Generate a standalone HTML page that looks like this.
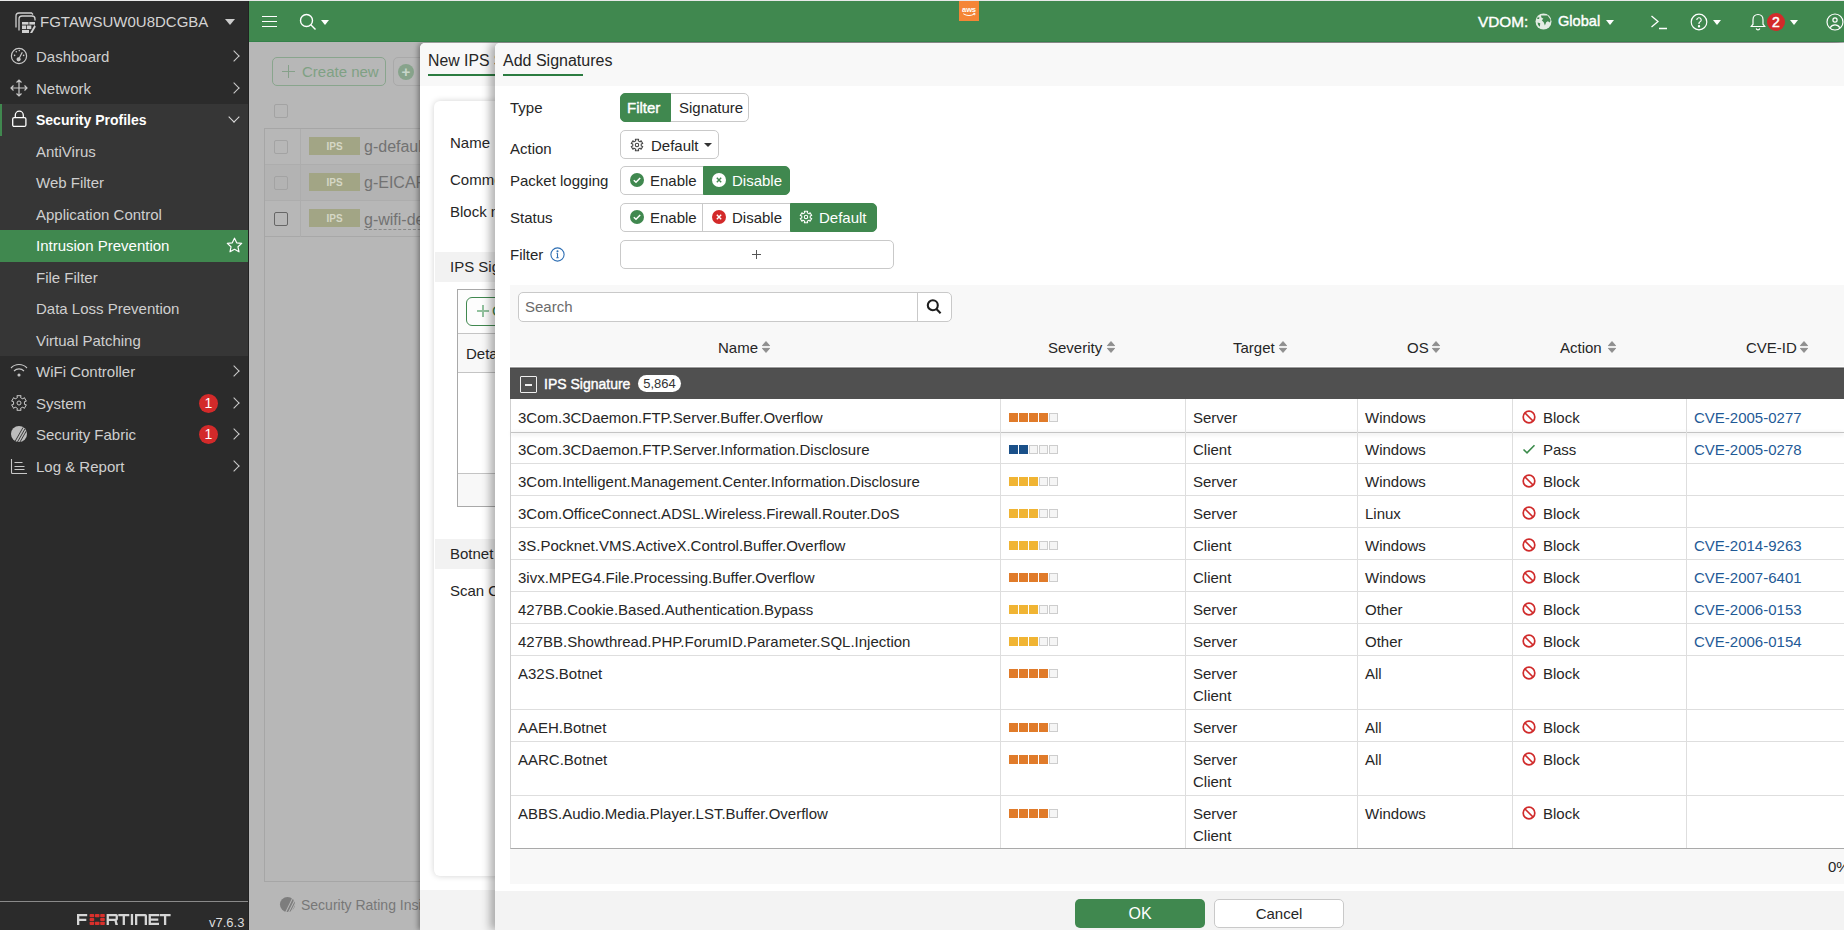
<!DOCTYPE html>
<html><head><meta charset="utf-8">
<style>
*{box-sizing:border-box;margin:0;padding:0}
html,body{width:1844px;height:930px;overflow:hidden;background:#b7b7b7;font-family:"Liberation Sans",sans-serif;font-size:15px;color:#262626}
.a{position:absolute}
.nw{white-space:nowrap}
/* sidebar */
#sb{position:absolute;left:0;top:0;width:249px;height:930px;background:#2b2b2b;border-right:1px solid #222;z-index:10}
#topline{position:absolute;left:0;top:0;width:1844px;height:1px;background:#e9e9e9;z-index:50}
.si{position:absolute;margin-top:1px;left:36px;color:#cfcfcf;font-size:15px;line-height:20px;white-space:nowrap}
.chev{position:absolute;left:230px;width:8px;height:8px;border-right:1.5px solid #ccc;border-top:1.5px solid #ccc;transform:rotate(45deg)}
.badge{position:absolute;left:199px;width:19px;height:19px;border-radius:50%;background:#d32a2a;color:#fff;font-size:14px;line-height:19px;text-align:center;font-weight:400}
/* topbar */
#tb{position:absolute;left:249px;top:1px;width:1595px;height:41px;background:#40884f;z-index:10;border-bottom:1px solid #34814a}
/* main overlay */
#main{position:absolute;left:249px;top:42px;width:1595px;height:888px;background:#b7b7b7}
/* dialogs */
#d1{position:absolute;left:420px;top:43px;width:1424px;height:887px;background:#fff;border-radius:5px 0 0 0;box-shadow:-2px 0 5px rgba(0,0,0,.35)}
#d2{position:absolute;left:495px;top:43px;width:1349px;height:887px;background:#fff;border-radius:5px 0 0 0;box-shadow:-5px 0 9px rgba(0,0,0,.3)}
#d1 .nw,#main .nw{margin-top:1px}
</style></head><body>
<div id="topline"></div>
<div id="sb">
 <svg class="a" style="left:14px;top:12px" width="22" height="22" viewBox="0 0 22 22" fill="none" stroke="#cfcfcf" stroke-width="1.3">
  <path d="M2 15.5V4a3 3 0 0 1 3-3H17.5l1.5 1.5"/>
  <path d="M5 18.5V7a3 3 0 0 1 3-3H18a3 3 0 0 1 3 3v1.5"/>
  <g fill="#d0d0d0" stroke="none"><rect x="8" y="10" width="6.5" height="2.6"/><rect x="15.3" y="10" width="5.7" height="2.6"/><rect x="8" y="13.5" width="4" height="3.6"/><rect x="12.8" y="13.5" width="4.5" height="3.6"/><rect x="8" y="18" width="7" height="3"/><path d="M16 21l4.5-8 1.3 1.8-3.6 6.2z"/></g>
 </svg>
 <div class="si" style="left:40px;top:11px;font-size:15px;color:#d4d4d4">FGTAWSUW0U8DCGBA</div>
 <div class="a" style="left:225px;top:19px;width:0;height:0;border-left:5px solid transparent;border-right:5px solid transparent;border-top:6px solid #ccc"></div>

 <svg class="a" style="left:10px;top:47px" width="18" height="18" viewBox="0 0 18 18" fill="none" stroke="#c8c8c8" stroke-width="1.2">
  <circle cx="9" cy="9" r="7.6"/><path d="M9.3 11 L12.3 5.2"/><circle cx="8.6" cy="12.3" r="1.5" fill="#c8c8c8"/>
  <g fill="#c8c8c8" stroke="none"><circle cx="4.6" cy="8.4" r=".8"/><circle cx="6.3" cy="4.8" r=".8"/><circle cx="9.3" cy="3.6" r=".8"/><circle cx="13.6" cy="8.4" r=".8"/></g>
 </svg>
 <div class="si" style="top:46px">Dashboard</div><div class="chev" style="top:52px"></div>

 <svg class="a" style="left:10px;top:79px" width="18" height="18" viewBox="0 0 18 18" fill="none" stroke="#c8c8c8" stroke-width="1.2">
  <path d="M9 1v16M1 9h16M6.5 3.5L9 1l2.5 2.5M6.5 14.5L9 17l2.5-2.5M3.5 6.5L1 9l2.5 2.5M14.5 6.5L17 9l-2.5 2.5"/>
 </svg>
 <div class="si" style="top:78px">Network</div><div class="chev" style="top:84px"></div>

 <div class="a" style="left:0;top:104px;width:248px;height:252px;background:#363636"></div>
 <div class="a" style="left:0;top:104px;width:2px;height:32px;background:#40884f"></div>
 <svg class="a" style="left:11px;top:110px" width="17" height="18" viewBox="0 0 17 18" fill="none" stroke="#fff" stroke-width="1.3">
  <rect x="1.7" y="7.6" width="13.2" height="8.8" rx="1.5"/><path d="M4.3 7.6V5.2a4 4 0 0 1 8 0v2.4"/>
 </svg>
 <div class="si" style="top:109px;color:#fff;font-weight:700;font-size:14px">Security Profiles</div>
 <div class="a" style="left:230px;top:113px;width:8px;height:8px;border-right:1.5px solid #ddd;border-bottom:1.5px solid #ddd;transform:rotate(45deg)"></div>

 <div class="si" style="top:141px">AntiVirus</div>
 <div class="si" style="top:172px">Web Filter</div>
 <div class="si" style="top:204px">Application Control</div>
 <div class="a" style="left:0;top:230px;width:248px;height:32px;background:#40884f"></div>
 <div class="si" style="top:235px;color:#fff">Intrusion Prevention</div>
 <svg class="a" style="left:226px;top:237px" width="17" height="17" viewBox="0 0 17 17" fill="none" stroke="#fff" stroke-width="1.2">
  <path d="M8.5 1.2l2.2 4.6 5 .6-3.7 3.4 1 5-4.5-2.5-4.5 2.5 1-5L1.3 6.4l5-.6z" stroke-linejoin="round"/>
 </svg>
 <div class="si" style="top:267px">File Filter</div>
 <div class="si" style="top:298px">Data Loss Prevention</div>
 <div class="si" style="top:330px">Virtual Patching</div>

 <svg class="a" style="left:10px;top:363px" width="18" height="15" viewBox="0 0 18 15" fill="none" stroke="#c8c8c8" stroke-width="1.1">
  <path d="M1 5 a11 11 0 0 1 16 0"/><path d="M4 8 a7 7 0 0 1 10 0"/><circle cx="9" cy="12" r="1" fill="#c8c8c8"/>
 </svg>
 <div class="si" style="top:361px">WiFi Controller</div><div class="chev" style="top:367px"></div>

 <svg class="a" style="left:10px;top:394px" width="18" height="18" viewBox="0 0 18 18" fill="none" stroke="#c8c8c8" stroke-width="1">
  <path d="M6.91 1.69 L11.09 1.69 L10.54 3.62 L12.89 4.97 L14.28 3.53 L16.37 7.16 L14.43 7.65 L14.43 10.35 L16.37 10.84 L14.28 14.47 L12.89 13.03 L10.54 14.38 L11.09 16.31 L6.91 16.31 L7.46 14.38 L5.11 13.03 L3.72 14.47 L1.63 10.84 L3.57 10.35 L3.57 7.65 L1.63 7.16 L3.72 3.53 L5.11 4.97 L7.46 3.62Z" stroke-linejoin="round"/>
  <circle cx="9" cy="9" r="2"/>
 </svg>
 <div class="si" style="top:393px">System</div>
 <div class="badge" style="top:394px">1</div><div class="chev" style="top:399px"></div>

 <svg class="a" style="left:10px;top:425px" width="18" height="18" viewBox="0 0 18 18">
  <circle cx="9" cy="9" r="8" fill="#bdbdbd"/>
  <path d="M5 16.5L13 2.5M7.3 17.3L15 3.8M9.6 17.6L16.6 5.5" stroke="#2c2c2c" stroke-width=".9"/>
 </svg>
 <div class="si" style="top:424px">Security Fabric</div>
 <div class="badge" style="top:425px">1</div><div class="chev" style="top:430px"></div>

 <svg class="a" style="left:10px;top:458px" width="18" height="16" viewBox="0 0 18 16" fill="none" stroke="#c8c8c8" stroke-width="1.1">
  <path d="M1.5 1v13.5a1 1 0 0 0 1 1H17"/><path d="M4.5 4.5h8M4.5 8.5h10M4.5 11.5h10"/>
 </svg>
 <div class="si" style="top:456px">Log &amp; Report</div><div class="chev" style="top:462px"></div>

 <div class="a" style="left:0;top:901px;width:248px;height:1px;background:#8a8a8a"></div>
 <svg class="a" style="left:77px;top:914px" width="94" height="11" viewBox="0 0 94 11" fill="#d6d6d6">
 <path d="M0 0h10.2v2.3H2.3v2.5h7v2.3h-7V11H0z"/>
 <g fill="#d9302c">
  <rect x="12.6" y="0" width="4.6" height="3.2" rx=".8"/><rect x="17.9" y="0" width="4.6" height="3.2" rx=".8"/><rect x="23.2" y="0" width="4.6" height="3.2" rx=".8"/>
  <rect x="12.6" y="3.9" width="4.6" height="3.2" rx=".8"/><rect x="23.2" y="3.9" width="4.6" height="3.2" rx=".8"/>
  <rect x="12.6" y="7.8" width="4.6" height="3.2" rx=".8"/><rect x="17.9" y="7.8" width="4.6" height="3.2" rx=".8"/><rect x="23.2" y="7.8" width="4.6" height="3.2" rx=".8"/>
 </g>
 <path d="M29.6 0h9.5a1.8 1.8 0 0 1 1.8 1.8v3.2a1.8 1.8 0 0 1-1.2 1.7L41 11h-2.6l-.9-4H31.9V11h-2.3zM31.9 2.3v2.5h6.7V2.3z"/>
 <path d="M41.3 0h11v2.3h-4.35V11h-2.3V2.3h-4.35z"/>
 <path d="M53.8 0h2.3v11h-2.3z"/>
 <path d="M58 11V0h10.2a1.8 1.8 0 0 1 1.8 1.8V11h-2.3V2.3h-7.4V11z"/>
 <path d="M71.6 0h10.4v2.3h-8.1v2.3h7.4v2.2h-7.4v1.9h8.1V11H71.6z"/>
 <path d="M82.6 0h11v2.3h-4.35V11h-2.3V2.3h-4.35z"/>
</svg>
 <div class="a nw" style="left:209px;top:915px;font-size:13px;color:#ddd">v7.6.3</div>
</div>
<div id="tb">
 <div class="a" style="left:13px;top:15px;width:15px;height:1.4px;background:#fff"></div>
 <div class="a" style="left:13px;top:20px;width:15px;height:1.4px;background:#fff"></div>
 <div class="a" style="left:13px;top:25px;width:15px;height:1.4px;background:#fff"></div>
 <svg class="a" style="left:50px;top:12px" width="18" height="18" viewBox="0 0 18 18" fill="none" stroke="#fff" stroke-width="1.4"><circle cx="7.5" cy="7.5" r="6"/><path d="M11.8 11.8L16.5 16.5"/></svg>
 <div class="a" style="left:72px;top:19px;width:0;height:0;border-left:4px solid transparent;border-right:4px solid transparent;border-top:5px solid #fff"></div>
 <svg class="a" style="left:710px;top:0" width="20" height="20" viewBox="0 0 20 20"><rect width="20" height="20" fill="#f58536"/><text x="10" y="11.3" text-anchor="middle" font-family="Liberation Sans" font-weight="700" font-size="7.6" fill="#fff" letter-spacing="-.2">aws</text><path d="M4.3 12.8Q10 16.3 15.6 12.8" stroke="#fff" stroke-width="1" fill="none"/><path d="M14.2 12.3l1.8.2-.4 1.7" stroke="#fff" stroke-width=".9" fill="none"/></svg>
 <div class="a nw" style="left:1229px;top:12px;font-size:15.3px;color:#fff;-webkit-text-stroke:.4px #fff">VDOM:</div>
 <svg class="a" style="left:1286px;top:12px" width="17" height="17" viewBox="0 0 17 17"><circle cx="8.5" cy="8.5" r="8" fill="#e3ece4"/><path d="M6 2.6L12.6 2.4L15.6 6.8L15 9.6L12.8 8.2L11.2 9.2L9.9 12.6L8.7 9.2L6.8 7.2L8.4 5.8L6.4 4.6Z M2.6 9.4L5.2 10.3L4.9 13.8L3.1 12Z M2.4 4.6L4.4 4.2L4.1 6.1L2.2 6Z" fill="#40884f"/></svg>
 <div class="a nw" style="left:1309px;top:12px;font-size:14.6px;color:#fff;-webkit-text-stroke:.4px #fff">Global</div>
 <div class="a" style="left:1357px;top:19px;width:0;height:0;border-left:4.5px solid transparent;border-right:4.5px solid transparent;border-top:5px solid #fff"></div>
 <svg class="a" style="left:1401px;top:13px" width="18" height="16" viewBox="0 0 18 16" fill="none" stroke="#fff" stroke-width="1.3"><path d="M1.5 2L8 7.5 1.5 13M9 14.5h8"/></svg>
 <svg class="a" style="left:1441px;top:12px" width="18" height="18" viewBox="0 0 18 18" fill="none" stroke="#fff" stroke-width="1.2"><circle cx="9" cy="9" r="7.8"/><path d="M6.8 7a2.2 2.2 0 1 1 3 2c-.6.3-.8.7-.8 1.4v.6"/><circle cx="9" cy="13.3" r=".6" fill="#fff"/></svg>
 <div class="a" style="left:1464px;top:19px;width:0;height:0;border-left:4.5px solid transparent;border-right:4.5px solid transparent;border-top:5px solid #fff"></div>
 <svg class="a" style="left:1501px;top:12px" width="16" height="18" viewBox="0 0 16 18" fill="none" stroke="#fff" stroke-width="1.2"><path d="M8 1.5c-3 0-5 2.2-5 5.2v4.5L1.3 13.5h13.4L13 11.2V6.7c0-3-2-5.2-5-5.2zM6.2 15.5a1.9 1.9 0 0 0 3.6 0"/></svg>
 <div class="a" style="left:1518px;top:12px;width:18px;height:18px;border-radius:50%;background:#d32a2a;color:#fff;font-size:14px;-webkit-text-stroke:.5px #fff;text-align:center;line-height:18px">2</div>
 <div class="a" style="left:1541px;top:19px;width:0;height:0;border-left:4.5px solid transparent;border-right:4.5px solid transparent;border-top:5px solid #fff"></div>
 <svg class="a" style="left:1577px;top:12px" width="18" height="18" viewBox="0 0 18 18" fill="none" stroke="#fff" stroke-width="1.2"><circle cx="9" cy="9" r="8"/><circle cx="9" cy="7" r="2.1"/><path d="M4.2 14.8c1-2 2.8-3 4.8-3s3.8 1 4.8 3"/></svg>
</div>
<div id="main">
 <div class="a" style="left:23px;top:15px;width:114px;height:29px;border:1px solid #89a58d;border-radius:5px"></div><div class="a nw" style="left:53px;top:20px;color:#7fa184;font-size:15px;line-height:18px">Create new</div>
 <div class="a" style="left:33px;top:29px;width:13px;height:1.3px;background:#86a08a"></div>
 <div class="a" style="left:39px;top:23px;width:1.3px;height:13px;background:#86a08a"></div>
 <div class="a" style="left:144px;top:15px;width:40px;height:29px;border:1px solid #a9a9a9;border-radius:5px"></div>
 <div class="a" style="left:149px;top:22px;width:16px;height:16px;border-radius:50%;background:#87a38b;color:#c8d6ca;font-size:15px;line-height:16px;text-align:center;font-weight:700">+</div>
 <div class="a" style="left:25px;top:62px;width:14px;height:14px;border:1px solid #a3a3a3;border-radius:2px"></div>
 <div class="a" style="left:15px;top:86px;width:200px;height:754px;border:1px solid #a6a6a6;border-right:none"></div>
 <div class="a" style="left:16px;top:87px;width:199px;height:36px;border-bottom:1px solid #adadad"></div>
 <div class="a" style="left:16px;top:123px;width:199px;height:36px;border-bottom:1px solid #adadad;background:#b3b3b3"></div>
 <div class="a" style="left:16px;top:159px;width:199px;height:36px;border-bottom:1px solid #a8a8a8"></div>
 <div class="a" style="left:51px;top:87px;width:1px;height:108px;background:#adadad"></div>
 <div class="a" style="left:25px;top:98px;width:14px;height:14px;border:1px solid #a3a3a3;border-radius:2px"></div>
 <div class="a" style="left:25px;top:134px;width:14px;height:14px;border:1px solid #a3a3a3;border-radius:2px"></div>
 <div class="a" style="left:25px;top:170px;width:14px;height:14px;border:1.3px solid #666;border-radius:2px"></div>
 <div class="a" style="left:60px;top:95px;width:51px;height:18px;background:#a2a585;color:#d5d7c6;font-size:10px;font-weight:700;text-align:center;line-height:20px">IPS</div>
 <div class="a" style="left:60px;top:131px;width:51px;height:18px;background:#a2a585;color:#d5d7c6;font-size:10px;font-weight:700;text-align:center;line-height:20px">IPS</div>
 <div class="a" style="left:60px;top:167px;width:51px;height:18px;background:#a2a585;color:#d5d7c6;font-size:10px;font-weight:700;text-align:center;line-height:20px">IPS</div>
 <div class="a nw" style="left:115px;top:95px;font-size:16px;color:#727272">g-default</div>
 <div class="a nw" style="left:115px;top:131px;font-size:16px;color:#727272">g-EICAR</div>
 <div class="a nw" style="left:115px;top:167px;font-size:16px;color:#727272;border-bottom:1px dashed #888;line-height:19px">g-wifi-default</div>
 <svg class="a" style="left:30px;top:854px" width="17" height="17" viewBox="0 0 18 18">
  <circle cx="9" cy="9" r="8" fill="#7d7d7d"/>
  <path d="M7 17.5L14.5 2M10 17.5L16.5 4.5M13 16.5L17.5 7.5" stroke="#b7b7b7" stroke-width="1.1"/>
 </svg>
 <div class="a nw" style="left:52px;top:854px;font-size:14px;color:#777">Security Rating Insights</div>
</div>
<div id="d1">
 <div class="a" style="left:0;top:0;width:100%;height:43px;background:#f8f8f8;border-radius:5px 0 0 0"></div>
 <div class="a nw" style="left:8px;top:8px;font-size:15.8px;color:#262626">New IPS Sensor</div>
 <div class="a" style="left:8px;top:31px;width:100px;height:2px;background:#2c7c41"></div>
 <div class="a" style="left:14px;top:58px;width:400px;height:775px;background:#fff;border-radius:6px;box-shadow:0 0 6px rgba(0,0,0,.18)"></div>
 <div class="a nw" style="left:30px;top:90px">Name</div>
 <div class="a nw" style="left:30px;top:127px">Comments</div>
 <div class="a nw" style="left:30px;top:159px">Block malicious</div>
 <div class="a" style="left:15px;top:209px;width:400px;height:30px;background:#f2f2f2"></div>
 <div class="a nw" style="left:30px;top:214px">IPS Signatures</div>
 <div class="a" style="left:37px;top:246px;width:300px;height:218px;border:1px solid #a9a9a9"></div>
 <div class="a" style="left:38px;top:247px;width:300px;height:44px;background:#fdfdfd;border-bottom:1px solid #c4c4c4"></div>
 <div class="a" style="left:46px;top:254px;width:100px;height:29px;border:1px solid #40884f;border-radius:6px"></div>
 <div class="a" style="left:57px;top:267px;width:12px;height:2px;background:#92c29e"></div>
 <div class="a" style="left:62px;top:262px;width:2px;height:12px;background:#92c29e"></div>
 <div class="a nw" style="left:72px;top:258px;color:#40884f">Create New</div>
 <div class="a" style="left:38px;top:291px;width:300px;height:39px;background:#f8f8f8;border-bottom:1px solid #c4c4c4"></div>
 <div class="a nw" style="left:46px;top:301px">Details</div>
 <div class="a" style="left:38px;top:430px;width:300px;height:33px;background:#f8f8f8;border-top:1px solid #c4c4c4"></div>
 <div class="a" style="left:15px;top:496px;width:400px;height:30px;background:#f2f2f2"></div>
 <div class="a nw" style="left:30px;top:501px">Botnet C&amp;C</div>
 <div class="a nw" style="left:30px;top:538px">Scan Outgoing</div>
 <div class="a" style="left:0;top:847px;width:100%;height:40px;background:#f3f3f3"></div>
</div>
<div id="d2">
<div class="a" style="left:0;top:0;width:100%;height:43px;background:#f8f8f8;border-radius:5px 0 0 0"></div>
<div class="a nw" style="left:8px;top:9px;font-size:16px;color:#262626">Add Signatures</div>
<div class="a" style="left:8px;top:31px;width:80px;height:2px;background:#2c7c41"></div>
<div class="a nw" style="left:15px;top:56px;line-height:18px">Type</div>
<div class="a nw" style="left:15px;top:97px;line-height:18px">Action</div>
<div class="a nw" style="left:15px;top:129px;line-height:18px">Packet logging</div>
<div class="a nw" style="left:15px;top:166px;line-height:18px">Status</div>
<div class="a nw" style="left:15px;top:203px;line-height:18px">Filter</div>
<svg class="a" style="left:55px;top:204px" width="15" height="15" viewBox="0 0 15 15" fill="none" stroke="#2f6fb3" stroke-width="1.1"><circle cx="7.5" cy="7.5" r="6.6"/><path d="M7.5 6.3v4.5M6.3 10.8h2.4M6.5 6.3h1"/><circle cx="7.5" cy="4.2" r=".5" fill="#2f6fb3"/></svg>
<div class="a" style="left:125px;top:50px;width:129px;height:29px">
<div class="a" style="left:0px;top:0;width:51px;height:29px;background:#40884f;color:#fff;border:1px solid #40884f;border-radius:5px 0 0 5px;z-index:1;"><div class="a" style="left:-1px;top:-1px"><div class="a nw" style="left:7px;top:6px;line-height:18px;font-size:15px;-webkit-text-stroke:.4px #fff">Filter</div></div></div>
<div class="a" style="left:50px;top:0;width:79px;height:29px;background:#fff;color:#262626;border:1px solid #c9c9c9;border-radius:0 5px 5px 0;"><div class="a" style="left:-1px;top:-1px"><div class="a nw" style="left:9px;top:6px;line-height:18px;">Signature</div></div></div>
</div>
<div class="a" style="left:125px;top:87px;width:99px;height:29px;border:1px solid #c9c9c9;border-radius:5px;background:#fff"><svg class="a" style="left:9px;top:7px" width="14" height="14" viewBox="0 0 18 18" fill="none" stroke="#444" stroke-width="1.4"><path d="M6.91 1.69 L11.09 1.69 L10.54 3.62 L12.89 4.97 L14.28 3.53 L16.37 7.16 L14.43 7.65 L14.43 10.35 L16.37 10.84 L14.28 14.47 L12.89 13.03 L10.54 14.38 L11.09 16.31 L6.91 16.31 L7.46 14.38 L5.11 13.03 L3.72 14.47 L1.63 10.84 L3.57 10.35 L3.57 7.65 L1.63 7.16 L3.72 3.53 L5.11 4.97 L7.46 3.62Z" stroke-linejoin="round"/><circle cx="9" cy="9" r="2.2"/></svg><div class="a nw" style="left:30px;top:6px;line-height:18px;">Default</div><div class="a" style="left:83px;top:12px;border-left:4px solid transparent;border-right:4px solid transparent;border-top:4.5px solid #333"></div></div>
<div class="a" style="left:125px;top:123px;width:170px;height:29px">
<div class="a" style="left:0px;top:0;width:84px;height:29px;background:#fff;color:#262626;border:1px solid #c9c9c9;border-radius:5px 0 0 5px;"><div class="a" style="left:-1px;top:-1px"><svg class="a" style="left:10px;top:7px" width="14" height="14" viewBox="0 0 14 14"><circle cx="7" cy="7" r="7" fill="#40884f"/><path d="M3.8 7.2l2.2 2.1 4.2-4.3" stroke="#fff" stroke-width="1.5" fill="none"/></svg><div class="a nw" style="left:30px;top:6px;line-height:18px;">Enable</div></div></div>
<div class="a" style="left:83px;top:0;width:87px;height:29px;background:#40884f;color:#fff;border:1px solid #40884f;border-radius:0 5px 5px 0;z-index:1;"><div class="a" style="left:-1px;top:-1px"><svg class="a" style="left:9px;top:7px" width="14" height="14" viewBox="0 0 14 14"><circle cx="7" cy="7" r="7" fill="#fff"/><path d="M4.8 4.8l4.4 4.4M9.2 4.8l-4.4 4.4" stroke="#40884f" stroke-width="1.4"/></svg><div class="a nw" style="left:29px;top:6px;line-height:18px;">Disable</div></div></div>
</div>
<div class="a" style="left:125px;top:160px;width:257px;height:29px">
<div class="a" style="left:0px;top:0;width:83px;height:29px;background:#fff;color:#262626;border:1px solid #c9c9c9;border-radius:5px 0 0 5px;"><div class="a" style="left:-1px;top:-1px"><svg class="a" style="left:10px;top:7px" width="14" height="14" viewBox="0 0 14 14"><circle cx="7" cy="7" r="7" fill="#40884f"/><path d="M3.8 7.2l2.2 2.1 4.2-4.3" stroke="#fff" stroke-width="1.5" fill="none"/></svg><div class="a nw" style="left:30px;top:6px;line-height:18px;">Enable</div></div></div>
<div class="a" style="left:82px;top:0;width:89px;height:29px;background:#fff;color:#262626;border:1px solid #c9c9c9;border-radius:0;"><div class="a" style="left:-1px;top:-1px"><svg class="a" style="left:10px;top:7px" width="14" height="14" viewBox="0 0 14 14"><circle cx="7" cy="7" r="7" fill="#d32a2a"/><path d="M4.8 4.8l4.4 4.4M9.2 4.8l-4.4 4.4" stroke="#fff" stroke-width="1.4"/></svg><div class="a nw" style="left:30px;top:6px;line-height:18px;">Disable</div></div></div>
<div class="a" style="left:170px;top:0;width:87px;height:29px;background:#40884f;color:#fff;border:1px solid #40884f;border-radius:0 5px 5px 0;z-index:1;"><div class="a" style="left:-1px;top:-1px"><svg class="a" style="left:9px;top:7px" width="14" height="14" viewBox="0 0 18 18" fill="none" stroke="#fff" stroke-width="1.4"><path d="M6.91 1.69 L11.09 1.69 L10.54 3.62 L12.89 4.97 L14.28 3.53 L16.37 7.16 L14.43 7.65 L14.43 10.35 L16.37 10.84 L14.28 14.47 L12.89 13.03 L10.54 14.38 L11.09 16.31 L6.91 16.31 L7.46 14.38 L5.11 13.03 L3.72 14.47 L1.63 10.84 L3.57 10.35 L3.57 7.65 L1.63 7.16 L3.72 3.53 L5.11 4.97 L7.46 3.62Z" stroke-linejoin="round"/><circle cx="9" cy="9" r="2.2"/></svg><div class="a nw" style="left:29px;top:6px;line-height:18px;">Default</div></div></div>
</div>
<div class="a" style="left:125px;top:197px;width:274px;height:29px;border:1px solid #c9c9c9;border-radius:5px;background:#fff"></div>
<div class="a" style="left:257px;top:211px;width:9px;height:1px;background:#555"></div>
<div class="a" style="left:261px;top:207px;width:1px;height:9px;background:#555"></div>
<div class="a" style="left:15px;top:242px;width:1334px;height:599px;background:#f8f8f8"></div>
<div class="a" style="left:23px;top:249px;width:434px;height:30px;border:1px solid #c9c9c9;border-radius:5px;background:#fff"></div>
<div class="a" style="left:422px;top:250px;width:1px;height:28px;background:#c9c9c9"></div>
<div class="a nw" style="left:30px;top:255px;line-height:18px;color:#6b6b6b">Search</div>
<svg class="a" style="left:431px;top:255px" width="16" height="17" viewBox="0 0 16 17" fill="none" stroke="#1e1e1e" stroke-width="2.1"><circle cx="6.8" cy="7.3" r="5"/><path d="M10.4 11l4.2 4.3"/></svg>
<div class="a nw" style="left:223px;top:296px;line-height:18px;">Name</div>
<svg class="a" style="left:266px;top:297px" width="10" height="14" viewBox="0 0 10 14" fill="#8f8f8f" stroke="#8f8f8f" stroke-width="1" stroke-linejoin="round"><path d="M5 1.6L8.6 5.6H1.4z M5 12.4L8.6 8.4H1.4z"/></svg>
<div class="a nw" style="left:553px;top:296px;line-height:18px;">Severity</div>
<svg class="a" style="left:611px;top:297px" width="10" height="14" viewBox="0 0 10 14" fill="#8f8f8f" stroke="#8f8f8f" stroke-width="1" stroke-linejoin="round"><path d="M5 1.6L8.6 5.6H1.4z M5 12.4L8.6 8.4H1.4z"/></svg>
<div class="a nw" style="left:738px;top:296px;line-height:18px;">Target</div>
<svg class="a" style="left:783px;top:297px" width="10" height="14" viewBox="0 0 10 14" fill="#8f8f8f" stroke="#8f8f8f" stroke-width="1" stroke-linejoin="round"><path d="M5 1.6L8.6 5.6H1.4z M5 12.4L8.6 8.4H1.4z"/></svg>
<div class="a nw" style="left:912px;top:296px;line-height:18px;">OS</div>
<svg class="a" style="left:936px;top:297px" width="10" height="14" viewBox="0 0 10 14" fill="#8f8f8f" stroke="#8f8f8f" stroke-width="1" stroke-linejoin="round"><path d="M5 1.6L8.6 5.6H1.4z M5 12.4L8.6 8.4H1.4z"/></svg>
<div class="a nw" style="left:1065px;top:296px;line-height:18px;">Action</div>
<svg class="a" style="left:1112px;top:297px" width="10" height="14" viewBox="0 0 10 14" fill="#8f8f8f" stroke="#8f8f8f" stroke-width="1" stroke-linejoin="round"><path d="M5 1.6L8.6 5.6H1.4z M5 12.4L8.6 8.4H1.4z"/></svg>
<div class="a nw" style="left:1251px;top:296px;line-height:18px;">CVE-ID</div>
<svg class="a" style="left:1304px;top:297px" width="10" height="14" viewBox="0 0 10 14" fill="#8f8f8f" stroke="#8f8f8f" stroke-width="1" stroke-linejoin="round"><path d="M5 1.6L8.6 5.6H1.4z M5 12.4L8.6 8.4H1.4z"/></svg>
<div class="a" style="left:15px;top:323px;width:1334px;height:1px;background:#fff"></div>
<div class="a" style="left:15px;top:324px;width:1334px;height:32px;background:#505050;border-top:1px solid #9e9e9e"></div>
<div class="a" style="left:15px;top:325px;width:1334px;height:1px;background:#484848"></div>
<div class="a" style="left:25px;top:333px;width:17px;height:17px;border:1.5px solid #eee;border-radius:1px"></div>
<div class="a" style="left:30px;top:341px;width:7px;height:1.5px;background:#eee"></div>
<div class="a nw" style="left:49px;top:332px;line-height:18px;color:#fff;font-size:14px;-webkit-text-stroke:.4px #fff">IPS Signature</div>
<div class="a nw" style="left:143px;top:332px;width:43px;height:17px;border-radius:9px;background:#fff;color:#333;font-size:13px;line-height:17px;text-align:center">5,864</div>
<div class="a" style="left:15px;top:356px;width:1334px;height:450px;background:#fff;border-left:1px solid #cfcfcf;border-bottom:1px solid #a9a9a9"></div>
<div class="a" style="left:16px;top:389px;width:1333px;height:1px;background:#c4c4c4;box-shadow:0 1px 4px rgba(0,0,0,.22);"></div>
<div class="a nw" style="left:23px;top:366px;line-height:18px;">3Com.3CDaemon.FTP.Server.Buffer.Overflow</div>
<div class="a" style="left:514px;top:370px;width:9px;height:9px;background:#e07b2a"></div>
<div class="a" style="left:524px;top:370px;width:9px;height:9px;background:#e07b2a"></div>
<div class="a" style="left:534px;top:370px;width:9px;height:9px;background:#e07b2a"></div>
<div class="a" style="left:544px;top:370px;width:9px;height:9px;background:#e07b2a"></div>
<div class="a" style="left:554px;top:370px;width:9px;height:9px;background:#f5f5f5;border:1px solid #cdcdcd"></div>
<div class="a nw" style="left:698px;top:366px;line-height:18px;">Server</div>
<div class="a nw" style="left:870px;top:366px;line-height:18px;">Windows</div>
<svg class="a" style="left:1027px;top:367px" width="14" height="14" viewBox="0 0 14 14" fill="none" stroke="#d02b2b" stroke-width="1.7"><circle cx="7" cy="7" r="5.8"/><path d="M3 3l8 8"/></svg>
<div class="a nw" style="left:1048px;top:366px;line-height:18px;">Block</div>
<div class="a nw" style="left:1199px;top:366px;line-height:18px;color:#1f5a96">CVE-2005-0277</div>
<div class="a" style="left:16px;top:420px;width:1333px;height:1px;background:#dedede;"></div>
<div class="a nw" style="left:23px;top:398px;line-height:18px;">3Com.3CDaemon.FTP.Server.Information.Disclosure</div>
<div class="a" style="left:514px;top:402px;width:9px;height:9px;background:#1a5089"></div>
<div class="a" style="left:524px;top:402px;width:9px;height:9px;background:#1a5089"></div>
<div class="a" style="left:534px;top:402px;width:9px;height:9px;background:#f5f5f5;border:1px solid #cdcdcd"></div>
<div class="a" style="left:544px;top:402px;width:9px;height:9px;background:#f5f5f5;border:1px solid #cdcdcd"></div>
<div class="a" style="left:554px;top:402px;width:9px;height:9px;background:#f5f5f5;border:1px solid #cdcdcd"></div>
<div class="a nw" style="left:698px;top:398px;line-height:18px;">Client</div>
<div class="a nw" style="left:870px;top:398px;line-height:18px;">Windows</div>
<svg class="a" style="left:1027px;top:399px" width="14" height="14" viewBox="0 0 14 14" fill="none" stroke="#3a8a4a" stroke-width="1.6"><path d="M1.5 7.5l3.5 3.3 7.5-7.5"/></svg>
<div class="a nw" style="left:1048px;top:398px;line-height:18px;">Pass</div>
<div class="a nw" style="left:1199px;top:398px;line-height:18px;color:#1f5a96">CVE-2005-0278</div>
<div class="a" style="left:16px;top:452px;width:1333px;height:1px;background:#dedede;"></div>
<div class="a nw" style="left:23px;top:430px;line-height:18px;">3Com.Intelligent.Management.Center.Information.Disclosure</div>
<div class="a" style="left:514px;top:434px;width:9px;height:9px;background:#f0b433"></div>
<div class="a" style="left:524px;top:434px;width:9px;height:9px;background:#f0b433"></div>
<div class="a" style="left:534px;top:434px;width:9px;height:9px;background:#f0b433"></div>
<div class="a" style="left:544px;top:434px;width:9px;height:9px;background:#f5f5f5;border:1px solid #cdcdcd"></div>
<div class="a" style="left:554px;top:434px;width:9px;height:9px;background:#f5f5f5;border:1px solid #cdcdcd"></div>
<div class="a nw" style="left:698px;top:430px;line-height:18px;">Server</div>
<div class="a nw" style="left:870px;top:430px;line-height:18px;">Windows</div>
<svg class="a" style="left:1027px;top:431px" width="14" height="14" viewBox="0 0 14 14" fill="none" stroke="#d02b2b" stroke-width="1.7"><circle cx="7" cy="7" r="5.8"/><path d="M3 3l8 8"/></svg>
<div class="a nw" style="left:1048px;top:430px;line-height:18px;">Block</div>
<div class="a" style="left:16px;top:484px;width:1333px;height:1px;background:#dedede;"></div>
<div class="a nw" style="left:23px;top:462px;line-height:18px;">3Com.OfficeConnect.ADSL.Wireless.Firewall.Router.DoS</div>
<div class="a" style="left:514px;top:466px;width:9px;height:9px;background:#f0b433"></div>
<div class="a" style="left:524px;top:466px;width:9px;height:9px;background:#f0b433"></div>
<div class="a" style="left:534px;top:466px;width:9px;height:9px;background:#f0b433"></div>
<div class="a" style="left:544px;top:466px;width:9px;height:9px;background:#f5f5f5;border:1px solid #cdcdcd"></div>
<div class="a" style="left:554px;top:466px;width:9px;height:9px;background:#f5f5f5;border:1px solid #cdcdcd"></div>
<div class="a nw" style="left:698px;top:462px;line-height:18px;">Server</div>
<div class="a nw" style="left:870px;top:462px;line-height:18px;">Linux</div>
<svg class="a" style="left:1027px;top:463px" width="14" height="14" viewBox="0 0 14 14" fill="none" stroke="#d02b2b" stroke-width="1.7"><circle cx="7" cy="7" r="5.8"/><path d="M3 3l8 8"/></svg>
<div class="a nw" style="left:1048px;top:462px;line-height:18px;">Block</div>
<div class="a" style="left:16px;top:516px;width:1333px;height:1px;background:#dedede;"></div>
<div class="a nw" style="left:23px;top:494px;line-height:18px;">3S.Pocknet.VMS.ActiveX.Control.Buffer.Overflow</div>
<div class="a" style="left:514px;top:498px;width:9px;height:9px;background:#f0b433"></div>
<div class="a" style="left:524px;top:498px;width:9px;height:9px;background:#f0b433"></div>
<div class="a" style="left:534px;top:498px;width:9px;height:9px;background:#f0b433"></div>
<div class="a" style="left:544px;top:498px;width:9px;height:9px;background:#f5f5f5;border:1px solid #cdcdcd"></div>
<div class="a" style="left:554px;top:498px;width:9px;height:9px;background:#f5f5f5;border:1px solid #cdcdcd"></div>
<div class="a nw" style="left:698px;top:494px;line-height:18px;">Client</div>
<div class="a nw" style="left:870px;top:494px;line-height:18px;">Windows</div>
<svg class="a" style="left:1027px;top:495px" width="14" height="14" viewBox="0 0 14 14" fill="none" stroke="#d02b2b" stroke-width="1.7"><circle cx="7" cy="7" r="5.8"/><path d="M3 3l8 8"/></svg>
<div class="a nw" style="left:1048px;top:494px;line-height:18px;">Block</div>
<div class="a nw" style="left:1199px;top:494px;line-height:18px;color:#1f5a96">CVE-2014-9263</div>
<div class="a" style="left:16px;top:548px;width:1333px;height:1px;background:#dedede;"></div>
<div class="a nw" style="left:23px;top:526px;line-height:18px;">3ivx.MPEG4.File.Processing.Buffer.Overflow</div>
<div class="a" style="left:514px;top:530px;width:9px;height:9px;background:#e07b2a"></div>
<div class="a" style="left:524px;top:530px;width:9px;height:9px;background:#e07b2a"></div>
<div class="a" style="left:534px;top:530px;width:9px;height:9px;background:#e07b2a"></div>
<div class="a" style="left:544px;top:530px;width:9px;height:9px;background:#e07b2a"></div>
<div class="a" style="left:554px;top:530px;width:9px;height:9px;background:#f5f5f5;border:1px solid #cdcdcd"></div>
<div class="a nw" style="left:698px;top:526px;line-height:18px;">Client</div>
<div class="a nw" style="left:870px;top:526px;line-height:18px;">Windows</div>
<svg class="a" style="left:1027px;top:527px" width="14" height="14" viewBox="0 0 14 14" fill="none" stroke="#d02b2b" stroke-width="1.7"><circle cx="7" cy="7" r="5.8"/><path d="M3 3l8 8"/></svg>
<div class="a nw" style="left:1048px;top:526px;line-height:18px;">Block</div>
<div class="a nw" style="left:1199px;top:526px;line-height:18px;color:#1f5a96">CVE-2007-6401</div>
<div class="a" style="left:16px;top:580px;width:1333px;height:1px;background:#dedede;"></div>
<div class="a nw" style="left:23px;top:558px;line-height:18px;">427BB.Cookie.Based.Authentication.Bypass</div>
<div class="a" style="left:514px;top:562px;width:9px;height:9px;background:#f0b433"></div>
<div class="a" style="left:524px;top:562px;width:9px;height:9px;background:#f0b433"></div>
<div class="a" style="left:534px;top:562px;width:9px;height:9px;background:#f0b433"></div>
<div class="a" style="left:544px;top:562px;width:9px;height:9px;background:#f5f5f5;border:1px solid #cdcdcd"></div>
<div class="a" style="left:554px;top:562px;width:9px;height:9px;background:#f5f5f5;border:1px solid #cdcdcd"></div>
<div class="a nw" style="left:698px;top:558px;line-height:18px;">Server</div>
<div class="a nw" style="left:870px;top:558px;line-height:18px;">Other</div>
<svg class="a" style="left:1027px;top:559px" width="14" height="14" viewBox="0 0 14 14" fill="none" stroke="#d02b2b" stroke-width="1.7"><circle cx="7" cy="7" r="5.8"/><path d="M3 3l8 8"/></svg>
<div class="a nw" style="left:1048px;top:558px;line-height:18px;">Block</div>
<div class="a nw" style="left:1199px;top:558px;line-height:18px;color:#1f5a96">CVE-2006-0153</div>
<div class="a" style="left:16px;top:612px;width:1333px;height:1px;background:#dedede;"></div>
<div class="a nw" style="left:23px;top:590px;line-height:18px;">427BB.Showthread.PHP.ForumID.Parameter.SQL.Injection</div>
<div class="a" style="left:514px;top:594px;width:9px;height:9px;background:#f0b433"></div>
<div class="a" style="left:524px;top:594px;width:9px;height:9px;background:#f0b433"></div>
<div class="a" style="left:534px;top:594px;width:9px;height:9px;background:#f0b433"></div>
<div class="a" style="left:544px;top:594px;width:9px;height:9px;background:#f5f5f5;border:1px solid #cdcdcd"></div>
<div class="a" style="left:554px;top:594px;width:9px;height:9px;background:#f5f5f5;border:1px solid #cdcdcd"></div>
<div class="a nw" style="left:698px;top:590px;line-height:18px;">Server</div>
<div class="a nw" style="left:870px;top:590px;line-height:18px;">Other</div>
<svg class="a" style="left:1027px;top:591px" width="14" height="14" viewBox="0 0 14 14" fill="none" stroke="#d02b2b" stroke-width="1.7"><circle cx="7" cy="7" r="5.8"/><path d="M3 3l8 8"/></svg>
<div class="a nw" style="left:1048px;top:590px;line-height:18px;">Block</div>
<div class="a nw" style="left:1199px;top:590px;line-height:18px;color:#1f5a96">CVE-2006-0154</div>
<div class="a" style="left:16px;top:666px;width:1333px;height:1px;background:#dedede;"></div>
<div class="a nw" style="left:23px;top:622px;line-height:18px;">A32S.Botnet</div>
<div class="a" style="left:514px;top:626px;width:9px;height:9px;background:#e07b2a"></div>
<div class="a" style="left:524px;top:626px;width:9px;height:9px;background:#e07b2a"></div>
<div class="a" style="left:534px;top:626px;width:9px;height:9px;background:#e07b2a"></div>
<div class="a" style="left:544px;top:626px;width:9px;height:9px;background:#e07b2a"></div>
<div class="a" style="left:554px;top:626px;width:9px;height:9px;background:#f5f5f5;border:1px solid #cdcdcd"></div>
<div class="a nw" style="left:698px;top:622px;line-height:18px;">Server</div>
<div class="a nw" style="left:698px;top:644px;line-height:18px;">Client</div>
<div class="a nw" style="left:870px;top:622px;line-height:18px;">All</div>
<svg class="a" style="left:1027px;top:623px" width="14" height="14" viewBox="0 0 14 14" fill="none" stroke="#d02b2b" stroke-width="1.7"><circle cx="7" cy="7" r="5.8"/><path d="M3 3l8 8"/></svg>
<div class="a nw" style="left:1048px;top:622px;line-height:18px;">Block</div>
<div class="a" style="left:16px;top:698px;width:1333px;height:1px;background:#dedede;"></div>
<div class="a nw" style="left:23px;top:676px;line-height:18px;">AAEH.Botnet</div>
<div class="a" style="left:514px;top:680px;width:9px;height:9px;background:#e07b2a"></div>
<div class="a" style="left:524px;top:680px;width:9px;height:9px;background:#e07b2a"></div>
<div class="a" style="left:534px;top:680px;width:9px;height:9px;background:#e07b2a"></div>
<div class="a" style="left:544px;top:680px;width:9px;height:9px;background:#e07b2a"></div>
<div class="a" style="left:554px;top:680px;width:9px;height:9px;background:#f5f5f5;border:1px solid #cdcdcd"></div>
<div class="a nw" style="left:698px;top:676px;line-height:18px;">Server</div>
<div class="a nw" style="left:870px;top:676px;line-height:18px;">All</div>
<svg class="a" style="left:1027px;top:677px" width="14" height="14" viewBox="0 0 14 14" fill="none" stroke="#d02b2b" stroke-width="1.7"><circle cx="7" cy="7" r="5.8"/><path d="M3 3l8 8"/></svg>
<div class="a nw" style="left:1048px;top:676px;line-height:18px;">Block</div>
<div class="a" style="left:16px;top:752px;width:1333px;height:1px;background:#dedede;"></div>
<div class="a nw" style="left:23px;top:708px;line-height:18px;">AARC.Botnet</div>
<div class="a" style="left:514px;top:712px;width:9px;height:9px;background:#e07b2a"></div>
<div class="a" style="left:524px;top:712px;width:9px;height:9px;background:#e07b2a"></div>
<div class="a" style="left:534px;top:712px;width:9px;height:9px;background:#e07b2a"></div>
<div class="a" style="left:544px;top:712px;width:9px;height:9px;background:#e07b2a"></div>
<div class="a" style="left:554px;top:712px;width:9px;height:9px;background:#f5f5f5;border:1px solid #cdcdcd"></div>
<div class="a nw" style="left:698px;top:708px;line-height:18px;">Server</div>
<div class="a nw" style="left:698px;top:730px;line-height:18px;">Client</div>
<div class="a nw" style="left:870px;top:708px;line-height:18px;">All</div>
<svg class="a" style="left:1027px;top:709px" width="14" height="14" viewBox="0 0 14 14" fill="none" stroke="#d02b2b" stroke-width="1.7"><circle cx="7" cy="7" r="5.8"/><path d="M3 3l8 8"/></svg>
<div class="a nw" style="left:1048px;top:708px;line-height:18px;">Block</div>
<div class="a nw" style="left:23px;top:762px;line-height:18px;">ABBS.Audio.Media.Player.LST.Buffer.Overflow</div>
<div class="a" style="left:514px;top:766px;width:9px;height:9px;background:#e07b2a"></div>
<div class="a" style="left:524px;top:766px;width:9px;height:9px;background:#e07b2a"></div>
<div class="a" style="left:534px;top:766px;width:9px;height:9px;background:#e07b2a"></div>
<div class="a" style="left:544px;top:766px;width:9px;height:9px;background:#e07b2a"></div>
<div class="a" style="left:554px;top:766px;width:9px;height:9px;background:#f5f5f5;border:1px solid #cdcdcd"></div>
<div class="a nw" style="left:698px;top:762px;line-height:18px;">Server</div>
<div class="a nw" style="left:698px;top:784px;line-height:18px;">Client</div>
<div class="a nw" style="left:870px;top:762px;line-height:18px;">Windows</div>
<svg class="a" style="left:1027px;top:763px" width="14" height="14" viewBox="0 0 14 14" fill="none" stroke="#d02b2b" stroke-width="1.7"><circle cx="7" cy="7" r="5.8"/><path d="M3 3l8 8"/></svg>
<div class="a nw" style="left:1048px;top:762px;line-height:18px;">Block</div>
<div class="a" style="left:505px;top:356px;width:1px;height:449px;background:#dedede"></div>
<div class="a" style="left:690px;top:356px;width:1px;height:449px;background:#dedede"></div>
<div class="a" style="left:862px;top:356px;width:1px;height:449px;background:#dedede"></div>
<div class="a" style="left:1017px;top:356px;width:1px;height:449px;background:#dedede"></div>
<div class="a" style="left:1191px;top:356px;width:1px;height:449px;background:#dedede"></div>
<div class="a nw" style="left:1333px;top:815px;line-height:18px;">0%</div>
<div class="a" style="left:0;top:848px;width:1349px;height:40px;background:#f3f3f3"></div>
<div class="a" style="left:580px;top:856px;width:130px;height:29px;border-radius:5px;background:#40884f;color:#fff;font-size:16px;text-align:center;line-height:29px">OK</div>
<div class="a" style="left:719px;top:856px;width:130px;height:29px;border-radius:5px;background:#fff;border:1px solid #c9c9c9;color:#262626;font-size:15px;text-align:center;line-height:27px">Cancel</div>
</div>
</body></html>
